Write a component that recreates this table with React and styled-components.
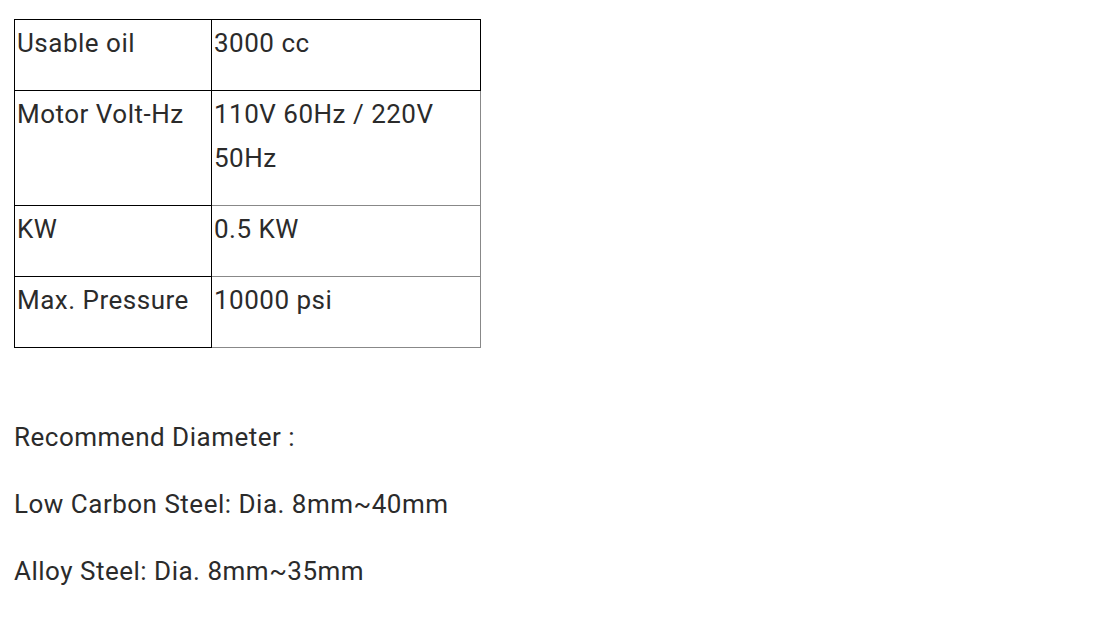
import React from "react";
import styled, { createGlobalStyle } from "styled-components";

const GlobalStyle = createGlobalStyle`
  body {
    margin: 0;
    background: #fff;
    font-family: Roboto, "Liberation Sans", sans-serif;
    color: #2b2b2b;
  }
`;

const Page = styled.div`
  padding: 19px 14px;
  font-size: 26px;
  line-height: 44px;
  letter-spacing: 0.5px;
`;

const SpecTable = styled.table`
  border-collapse: collapse;
  margin-bottom: 67px;
`;

const Cell = styled.td`
  padding: 1px 2px 0;
  vertical-align: top;
  width: ${(p) => p.$width}px;
  border: 1px solid ${(p) => (p.$dark ? "#000" : "#888")};
`;

const CellText = styled.p`
  margin: 0 0 25px;
`;

const Para = styled.p`
  margin: 0 0 23px;
`;

const specs = [
  ["Usable oil", "3000 cc"],
  ["Motor Volt-Hz", "110V 60Hz / 220V 50Hz"],
  ["KW", "0.5 KW"],
  ["Max. Pressure", "10000 psi"],
];

export default function App() {
  return (
    <>
      <GlobalStyle />
      <Page>
        <SpecTable>
          <tbody>
            {specs.map(([label, value], i) => (
              <tr key={label}>
                <Cell $dark $width={192}>
                  <CellText>{label}</CellText>
                </Cell>
                <Cell $dark={i === 0} $width={264}>
                  <CellText>{value}</CellText>
                </Cell>
              </tr>
            ))}
          </tbody>
        </SpecTable>
        <Para>Recommend Diameter :</Para>
        <Para>Low Carbon Steel: Dia. 8mm~40mm</Para>
        <Para>Alloy Steel: Dia. 8mm~35mm</Para>
      </Page>
    </>
  );
}
